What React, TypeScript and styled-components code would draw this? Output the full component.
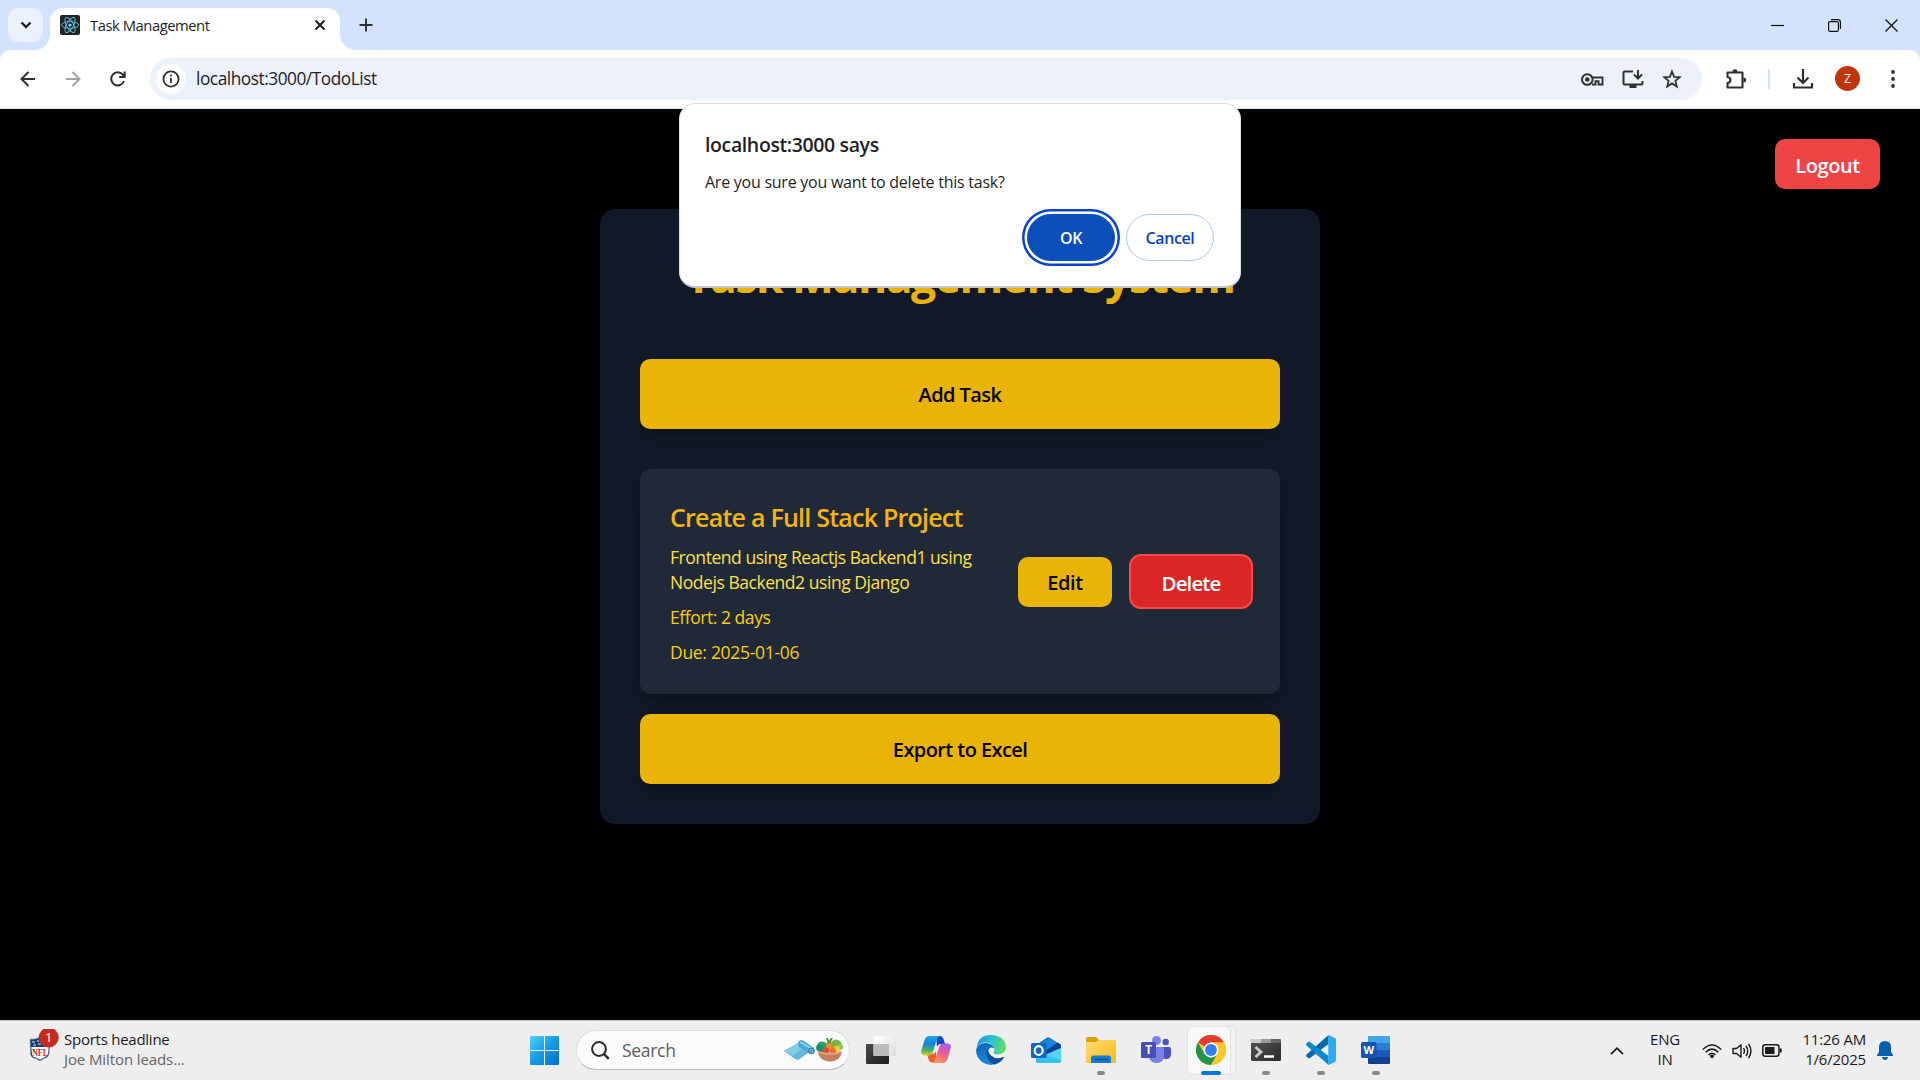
import React from "react";
import styled, { createGlobalStyle, css } from "styled-components";

const GlobalStyle = createGlobalStyle`
  *, *::before, *::after { box-sizing: border-box; }
  html, body { margin: 0; padding: 0; background: #000; overflow: hidden; }
  button { font: inherit; border: 0; padding: 0; margin: 0; background: none; }
  h1, h2, p { margin: 0; }
  svg { display: block; flex: none; }
`;

const Screen = styled.div`
  width: 1920px;
  height: 1080px;
  display: flex;
  flex-direction: column;
  position: relative;
  overflow: hidden;
  background: #000;
  font-family: "Open Sans", "Noto Sans", sans-serif;
  color: #1f1f1f;
`;

/* ---------- browser chrome ---------- */

const TabStrip = styled.header`
  height: 50px;
  flex: none;
  display: flex;
  align-items: flex-start;
  padding: 8px 22px 0 8px;
  background: #d3e3fd;
`;

const TabSearch = styled.button`
  width: 35px;
  height: 34px;
  border-radius: 11px;
  background: #ebf1fe;
  display: grid;
  place-items: center;
`;

const Tab = styled.div`
  position: relative;
  width: 290px;
  height: 42px;
  margin-left: 7px;
  padding: 0 13px 8px 10px;
  border-radius: 13px 13px 0 0;
  background: #fff;
  display: flex;
  align-items: center;

  &::before,
  &::after {
    content: "";
    position: absolute;
    bottom: 0;
    width: 15px;
    height: 15px;
  }
  &::before {
    left: -15px;
    background: radial-gradient(circle at 0 0, transparent 14.5px, #fff 15px);
  }
  &::after {
    right: -15px;
    background: radial-gradient(circle at 100% 0, transparent 14.5px, #fff 15px);
  }
`;

const TabTitle = styled.span`
  flex: 1;
  margin-left: 10px;
  font-size: 14.8px;
  line-height: 20px;
  letter-spacing: -0.47px;
`;

const NewTab = styled.button`
  width: 34px;
  height: 34px;
  margin-left: 9px;
  display: grid;
  place-items: center;
`;

const WindowControls = styled.div`
  margin-left: auto;
  height: 34px;
  display: flex;
  align-items: center;
  gap: 44px;
`;

const ToolbarBack = styled.div`
  height: 59px;
  flex: none;
  background: #d3e3fd;
`;

const Toolbar = styled.div`
  height: 59px;
  padding: 0 19px 1px 18px;
  border-radius: 10px 10px 0 0;
  border-bottom: 1px solid #dfe2e6;
  background: #fff;
  display: flex;
  align-items: center;
`;

const NavButtons = styled.div`
  display: flex;
  gap: 25px;
`;

const Omnibox = styled.div`
  width: 1552px;
  height: 42px;
  margin-left: 22px;
  padding: 0 20px 0 6px;
  border-radius: 21px;
  background: #ecf1fa;
  display: flex;
  align-items: center;
`;

const SiteInfo = styled.span`
  width: 30px;
  height: 30px;
  border-radius: 50%;
  background: #fff;
  display: grid;
  place-items: center;
`;

const Url = styled.span`
  margin-left: 10px;
  font-size: 17.3px;
  line-height: 24px;
  letter-spacing: -0.47px;
`;

const OmniActions = styled.div`
  margin-left: auto;
  display: flex;
  align-items: center;
  gap: 17px;
`;

const ToolbarActions = styled.div`
  flex: 1;
  margin-left: 22px;
  display: flex;
  align-items: center;
`;

const Divider = styled.span`
  width: 2px;
  height: 20px;
  margin: 0 22px 0 20px;
  background: #d3e3fd;
`;

const Avatar = styled.span`
  width: 25px;
  height: 25px;
  margin: 0 31px 0 21px;
  border-radius: 50%;
  background: #bf360c;
  color: #fff;
  font-size: 12.5px;
  line-height: 25px;
  text-align: center;
`;

/* ---------- page ---------- */

const Page = styled.main`
  height: 911px;
  flex: none;
  display: grid;
  grid-template-columns: 1fr 720px 1fr;
  align-items: start;
  background: #000;
`;

const LogoutButton = styled.button`
  grid-column: 3;
  justify-self: end;
  width: 105px;
  height: 50px;
  margin: 30px 40px 0 0;
  padding-top: 2px;
  border-radius: 10px;
  background: #ef4444;
  color: #fff;
  font-size: 20px;
  font-weight: 600;
  letter-spacing: -0.4px;
`;

const TaskPanel = styled.section`
  grid-column: 2;
  height: 615px;
  margin-top: 100px;
  padding: 40px;
  border-radius: 15px;
  background: #111827;
  display: flex;
  flex-direction: column;
`;

const PanelHeading = styled.h1`
  height: 52px;
  margin-bottom: 58px;
  padding-top: 2px;
  color: #eab308;
  font-size: 44.5px;
  font-weight: 700;
  line-height: 50px;
  letter-spacing: -1.5px;
  text-align: center;
  white-space: nowrap;
`;

const WideButton = styled.button`
  height: 70px;
  flex: none;
  padding-top: 2px;
  border-radius: 10px;
  background: #eab308;
  color: #000;
  font-size: 20px;
  font-weight: 600;
  line-height: 30px;
  letter-spacing: -0.58px;
  box-shadow: 0 12px 19px -4px rgba(0, 0, 0, 0.16), 0 5px 8px -5px rgba(0, 0, 0, 0.2);
`;

const TaskCard = styled.article`
  height: 225px;
  margin: 40px 0 20px;
  padding: 30px 27px 30px 30px;
  border-radius: 10px;
  background: #1f2937;
  box-shadow: 0 12px 19px -4px rgba(0, 0, 0, 0.2), 0 5px 8px -5px rgba(0, 0, 0, 0.2);
  display: flex;
  align-items: center;
  justify-content: space-between;
`;

const TaskInfo = styled.div`
  width: 330px;
  padding-top: 2px;
  display: flex;
  flex-direction: column;
  gap: 10px;
`;

const TaskTitle = styled.h2`
  color: #f5b50b;
  font-size: 25px;
  font-weight: 600;
  line-height: 35px;
  letter-spacing: -0.77px;
  white-space: nowrap;
`;

const TaskText = styled.p<{ $tone: string; $track?: number }>`
  color: ${(p) => p.$tone};
  font-size: 17.5px;
  line-height: 25px;
  letter-spacing: ${(p) => p.$track ?? -0.45}px;
  white-space: nowrap;
`;

const TaskActions = styled.div`
  display: flex;
  align-items: center;
  gap: 17px;
`;

const ActionButton = styled.button<{ $danger?: boolean }>`
  width: 94px;
  height: 50px;
  padding-top: 2px;
  border-radius: 10px;
  background: #eab308;
  color: #000;
  font-size: 20px;
  font-weight: 600;
  letter-spacing: -0.4px;
  ${(p) =>
    p.$danger &&
    css`
      width: 124px;
      height: 55px;
      border: 2px solid #f84a4a;
      border-radius: 12px;
      background: #dc2626;
      color: #fff;
      font-size: 20.5px;
      letter-spacing: -0.9px;
    `}
`;

/* ---------- confirm dialog ---------- */

const Dialog = styled.div`
  position: absolute;
  left: 679px;
  top: 103px;
  width: 562px;
  height: 185px;
  padding: 27px 26px 25px 25px;
  border: 1px solid #dcdee2;
  border-bottom: 2px solid #c2c6cc;
  border-radius: 16px;
  background: #fff;
  display: flex;
  flex-direction: column;
`;

const DialogTitle = styled.h2`
  font-size: 19.5px;
  font-weight: 600;
  line-height: 28px;
  letter-spacing: -0.38px;
`;

const DialogText = styled.p`
  margin-top: 12px;
  font-size: 16px;
  line-height: 22px;
  letter-spacing: -0.25px;
`;

const DialogActions = styled.div`
  margin-top: auto;
  display: flex;
  justify-content: flex-end;
  gap: 11px;
`;

const DialogButton = styled.button<{ $primary?: boolean }>`
  width: 88px;
  height: 47px;
  padding-top: 1px;
  border: 1px solid ${(p) => (p.$primary ? "#0b4fbb" : "#a8c7fa")};
  border-radius: 24px;
  background: ${(p) => (p.$primary ? "#0b4fbb" : "#fff")};
  color: ${(p) => (p.$primary ? "#fff" : "#0842c8")};
  font-size: 16px;
  font-weight: 600;
  letter-spacing: -0.4px;
  box-shadow: ${(p) => (p.$primary ? "0 0 0 2.5px #fff, 0 0 0 5px #0842cf" : "none")};
`;

/* ---------- taskbar ---------- */

const Taskbar = styled.footer`
  height: 60px;
  flex: none;
  border-top: 1px solid #c6c6c6;
  background: #eeeeee;
  display: flex;
`;

const Widget = styled.div`
  width: 530px;
  padding: 8px 0 0 27px;
  display: flex;
  gap: 5px;
`;

const WidgetLines = styled.div`
  font-size: 15px;
  line-height: 20px;
  letter-spacing: -0.25px;
  color: #1b1b1b;
`;

const WidgetSub = styled.div`
  color: #666;
  letter-spacing: -0.1px;
`;

const SearchPill = styled.div`
  width: 274px;
  height: 40px;
  margin: 9px 3px 0 17px;
  padding: 0 6px 0 14px;
  border: 1px solid #dedede;
  border-bottom-color: #bdbdbd;
  border-radius: 20px;
  background: #fbfbfb;
  display: flex;
  align-items: center;
  color: #5e5e5e;
  font-size: 17.5px;
`;

const SearchLabel = styled.span`
  flex: 1;
  margin-left: 12px;
  letter-spacing: -0.3px;
`;

const StartSlot = styled.div`
  padding-top: 15px;
`;

const AppSlot = styled.div`
  position: relative;
  width: 55px;
  height: 59px;
  padding-top: 14px;
  display: flex;
  justify-content: center;
  svg { position: relative; }
`;

const AppRow = styled.div`
  display: flex;
  padding-left: 0.5px;
`;

const ActiveTile = styled.span<{ $back?: boolean }>`
  position: absolute;
  top: 5px;
  left: ${(p) => (p.$back ? 12 : 3)}px;
  width: ${(p) => (p.$back ? 40 : 44)}px;
  height: 49px;
  border: 1px solid #e3e3e3;
  border-radius: 5px;
  background: ${(p) => (p.$back ? "#f3f3f3" : "#f8f8f8")};
`;

const Indicator = styled.span<{ $active?: boolean }>`
  position: absolute;
  bottom: 5px;
  width: ${(p) => (p.$active ? 20 : 8)}px;
  height: 4px;
  border-radius: 2px;
  background: ${(p) => (p.$active ? "#0078d4" : "#8a8a8a")};
`;

const Tray = styled.div`
  flex: 1;
  padding-right: 27px;
  display: flex;
  align-items: flex-start;
  justify-content: flex-end;
`;

const TrayText = styled.div<{ $align: string; $width: number; $gap: number }>`
  width: ${(p) => p.$width}px;
  margin-right: ${(p) => p.$gap}px;
  padding-top: 8px;
  text-align: ${(p) => p.$align};
  font-size: 15px;
  line-height: 20px;
  letter-spacing: -0.2px;
  white-space: nowrap;
  color: #1b1b1b;
`;

const TrayIcon = styled.span<{ $gap: number }>`
  height: 59px;
  margin-right: ${(p) => p.$gap}px;
  display: grid;
  place-items: center;
`;

/* ---------- icons ---------- */

const Line = ({ w, h = w, s = 2, c = "#303030", children }: any) => (
  <svg width={w} height={h} viewBox={`0 0 ${w} ${h}`} fill="none" stroke={c} strokeWidth={s}>
    {children}
  </svg>
);

const ReactMark = () => (
  <Line w={20} s={0.9} c="#58c4dc">
    <rect width="20" height="20" rx="2" fill="#222" stroke="none" />
    <circle cx="10" cy="10" r="1.5" fill="#7fe0f5" stroke="none" />
    {[0, 60, 120].map((a) => (
      <ellipse key={a} cx="10" cy="10" rx="8.5" ry="3.4" transform={`rotate(${a} 10 10)`} />
    ))}
  </Line>
);

const Shield = () => (
  <svg width="32" height="40" viewBox="0 0 32 40">
    <path d="M3 10 Q8 11 13 8 Q18 11 23 10 L22 25 Q21 29 17 29.500 L13 32 L9 29.500 Q4 29 3.500 25Z" fill="#173f78" stroke="#8293ad" strokeWidth=".7" />
    <path d="M4.300 18H21.700L21 25Q20 28 17 28.500L13 30.700L9 28.500Q5 28 5 25Z" fill="#fff" />
    <path d="M5 13h3M6 16h3M10 12h2M11 15h3" stroke="#dfe6f0" />
    <text x="13" y="27.300" textAnchor="middle" fontFamily="Liberation Serif" fontWeight="700" fontSize="11" textLength="16" lengthAdjust="spacingAndGlyphs" fill="#d5172e">NFL</text>
    <circle cx="21.700" cy="8.500" r="10" fill="#c42b1c" />
    <text x="21.700" y="13.200" textAnchor="middle" fontFamily="Open Sans" fontSize="13" fill="#fff">1</text>
  </svg>
);

const Windows = () => (
  <svg width="29" height="29" viewBox="0 0 29 29">
    <defs>
      <linearGradient id="win" x1="0" y1="0" x2="29" y2="29" gradientUnits="userSpaceOnUse">
        <stop stopColor="#4fd2fb" /><stop offset=".5" stopColor="#159be6" /><stop offset="1" stopColor="#006fd0" />
      </linearGradient>
    </defs>
    <path fill="url(#win)" d="M1 0h13v14H0V1Q0 0 1 0ZM15 0h13q1 0 1 1v13H15ZM0 15h14v14H1Q0 29 0 28ZM15 15h14v13q0 1-1 1H15Z" />
  </svg>
);

const YogaMat = () => (
  <svg width="32" height="22" viewBox="0 0 32 22">
    <path d="M0 12 14 4 27 12 14 21 11 20Z" fill="#62b9d8" />
    <path d="M0 12 13 4.500 20 9 8 17Z" fill="#83cde6" />
    <path d="M15 2Q17 0 20 2L30 9 26 15 15 8Q13 4 15 2Z" fill="#4ba9cd" />
    <path d="M16 3 28 10" stroke="#8cd5eb" strokeWidth="2" />
    <circle cx="27.500" cy="12" r="3.300" fill="#2e87b0" /><circle cx="27.500" cy="12" r="1.500" fill="none" stroke="#8bcfe6" />
  </svg>
);

const Basket = () => (
  <svg width="27" height="24" viewBox="0 0 27 24">
    <circle cx="6" cy="9" r="5.500" fill="#27a171" /><circle cx="3.500" cy="10" r="3.300" fill="#1c8c66" />
    <circle cx="20" cy="7" r="5.500" fill="#73b64a" /><circle cx="24" cy="9" r="3" fill="#8cc75f" />
    <path d="M10 5Q14 2 17 6L15 14H11Z" fill="#f08a2b" /><path d="M13 5 11 0M13 5 16 0" stroke="#39994b" strokeWidth="2" />
    <circle cx="21" cy="11" r="3" fill="#f7ce27" /><circle cx="10" cy="13" r="3.300" fill="#e64a2e" /><circle cx="17" cy="13" r="3" fill="#ee6a34" />
    <path d="M1.500 13Q14 17 26 13Q25 23 14 23.500 3 23 1.500 13Z" fill="#c58062" /><path d="M2 14Q14 18 25.500 14" stroke="#e4aa8d" fill="none" strokeWidth="1.500" />
  </svg>
);

const apps: { name: string; running?: boolean; active?: boolean; art: React.ReactNode }[] = [
  {
    name: "Task view",
    art: (
      <>
        <defs>
          <linearGradient id="tvd" x2="1" y2="1"><stop stopColor="#4a4a48" /><stop offset="1" stopColor="#1d1d1b" /></linearGradient>
          <linearGradient id="tvl" x2="1" y2="1"><stop stopColor="#fff" /><stop offset="1" stopColor="#dcdcdc" /></linearGradient>
        </defs>
        <rect x="0" y="9" width="23" height="20" rx="1" fill="url(#tvd)" />
        <rect x="7.500" y="1" width="22.500" height="20" rx="1" fill="url(#tvl)" />
        <path d="M7.500 9H23V21H8.500q-1 0-1-1Z" fill="#bcbcbc" />
      </>
    ),
  },
  {
    name: "Copilot",
    art: (
      <>
        <defs>
          <linearGradient id="cpa" x1="8" y1="1" x2="7" y2="21" gradientUnits="userSpaceOnUse"><stop stopColor="#1da8f0" /><stop offset=".4" stopColor="#1684d8" /><stop offset=".72" stopColor="#48b461" /><stop offset="1" stopColor="#f3d21b" /></linearGradient>
          <linearGradient id="cpb" x1="24" y1="8" x2="16" y2="28" gradientUnits="userSpaceOnUse"><stop stopColor="#a45bf0" /><stop offset=".5" stopColor="#ef5d93" /><stop offset="1" stopColor="#ff9a57" /></linearGradient>
        </defs>
        <path d="M15 1h4q2.500 0 3.300 2.500L24 9h-4q-3 0-4 3Z" fill="#1748c4" />
        <path d="M15 27.500h-4q-2.500 0-3.200-2.500L6 19h5q3 0 4-3Z" fill="#f0602c" />
        <path d="M8 1h11q-2 0-3 3l-4.500 14q-1 2.500-4 2.500H4Q-1 20.500.500 15L3.500 5Q5 1 8 1Z" fill="url(#cpa)" />
        <path d="M22 28H11q2 0 3-3l4.500-14q1-2.500 4-2.500H26q5 0 3.500 5.500L26.500 24Q25 28 22 28Z" fill="url(#cpb)" />
      </>
    ),
  },
  {
    name: "Edge",
    art: (
      <>
        <defs>
          <linearGradient id="eda" x1="2" y1="6" x2="29" y2="14" gradientUnits="userSpaceOnUse"><stop stopColor="#1a9ce5" /><stop offset=".5" stopColor="#2dc3cf" /><stop offset="1" stopColor="#66e052" /></linearGradient>
          <linearGradient id="edb" x1="3" y1="8" x2="10" y2="30" gradientUnits="userSpaceOnUse"><stop stopColor="#0d66b8" /><stop offset="1" stopColor="#1789e0" /></linearGradient>
        </defs>
        <path d="M.500 13Q2 0 15 0 29 .500 30 12 30 19 22 19.500 17 19.500 17.500 17 19 15.500 18.500 14 17 8 10 7.500 3 7.500.500 13Z" fill="url(#eda)" />
        <path d="M0 15Q2 8 9.500 8 17 8.500 18.500 13.500 14 10.500 12 15.500 10 23 17 29.800 11 30.500 6 27 0 22 0 15Z" fill="url(#edb)" />
        <path d="M12.500 13Q9 17 11.500 23 14 28.500 18 29.700 25 28 28 22.500 28.300 21.500 27 22 20 25 15 20.500 11.500 17 12.500 13Z" fill="#0d519c" />
      </>
    ),
  },
  {
    name: "Outlook",
    art: (
      <>
        <path d="M5 10 17 2 30 10v15q0 3-3 3H8q-3 0-3-3Z" fill="#1473c4" />
        <path d="M8 10 19 3 28 9 13 19Z" fill="#1688db" /><path d="M11 18 27 7.500 30 10v4L15 23Z" fill="#0a4296" />
        <path d="M5 19 14 20 30 13v12q0 3-3 3H8q-3 0-3-3Z" fill="#32c4ee" /><path d="M14 20 30 13v12Z" fill="#64dcf5" opacity=".7" />
        <rect x="0" y="8" width="15.500" height="15" rx="1.500" fill="#1267be" />
        <ellipse cx="7.700" cy="15.500" rx="4" ry="4.400" fill="none" stroke="#fff" strokeWidth="2.100" />
      </>
    ),
  },
  {
    name: "File Explorer",
    running: true,
    art: (
      <>
        <defs><linearGradient id="fld" x2="1" y2="1"><stop stopColor="#ffdc72" /><stop offset="1" stopColor="#f9b91e" /></linearGradient></defs>
        <path d="M0 4q0-2 2-2h8l3 3h15q2 0 2 2v5H0Z" fill="#dca006" />
        <path d="M0 7h10l3-2h15.500q1.500 0 1.500 1.500V28H0Z" fill="url(#fld)" />
        <path d="M5 28v-5q0-2.500 2.500-2.500h15q2.500 0 2.500 2.500v5Z" fill="#127bd2" /><path d="M8.500 24.500h13" stroke="#0a4b91" strokeWidth="1.500" />
      </>
    ),
  },
  {
    name: "Teams",
    art: (
      <>
        <circle cx="24.700" cy="7" r="3.200" fill="#4b53bc" /><path d="M20 12h8.500Q30 12 30 13.500V19q0 5-5 5-4 0-5-4Z" fill="#4b53bc" />
        <circle cx="15.500" cy="5.500" r="4.500" fill="#7b83eb" /><path d="M8 12h13.500Q23 12 23 13.500V20q0 8-7.500 8T8 20Z" fill="#7b83eb" />
        <rect y="7" width="15" height="16" rx="1.500" fill="#474eb8" />
        <text x="7.500" y="19.200" textAnchor="middle" fontFamily="Open Sans" fontWeight="700" fontSize="11.500" fill="#fff">T</text>
      </>
    ),
  },
  {
    name: "Chrome",
    running: true,
    active: true,
    art: (
      <>
        <circle cx="15" cy="15" r="15" fill="#fcc934" />
        <path d="M15 15 2 7.500A15 15 0 0 1 28 7.500H15Z" fill="#e33b2e" />
        <path d="M2 7.500A15 15 0 0 0 15 30L21.500 18.750 15 22.500 8.500 18.750Z" fill="#249447" />
        <path d="M15 30A15 15 0 0 0 28 7.500H15L21.500 18.750Z" fill="#fcc628" />
        <circle cx="15" cy="15" r="7.500" fill="#fff" /><circle cx="15" cy="15" r="5.900" fill="#347ff0" />
      </>
    ),
  },
  {
    name: "Terminal",
    running: true,
    art: (
      <>
        <defs><linearGradient id="trm" x2="1" y2="1"><stop stopColor="#555" /><stop offset="1" stopColor="#2b2b2b" /></linearGradient></defs>
        <rect y="4" width="30" height="22" rx="1.500" fill="url(#trm)" />
        <path d="M1.500 4H10v4H0V5.500Q0 4 1.500 4Z" fill="#cdcdcd" /><path d="M10 4h10v4H10Z" fill="#999" /><path d="M20 4h8.500Q30 4 30 5.500V8H20Z" fill="#666" />
        <path d="m4.500 12 5.500 5-5.500 5" fill="none" stroke="#ccc" strokeWidth="2.900" /><path d="M13 21.500h10" stroke="#fff" strokeWidth="2.500" />
      </>
    ),
  },
  {
    name: "VS Code",
    running: true,
    art: (
      <>
        <path d="M22.500 0v9L4 23q-1 .700-2 0L.500 21.500q-.800-1 0-2Z" fill="#0969ab" />
        <path d="M22.500 30v-9L4 7q-1-.700-2 0L.500 8.500q-.800 1 0 2Z" fill="#0a87cd" />
        <path d="M22.500 0 29 3q1 .500 1 2v20q0 1.500-1 2l-6.500 3Q21 29 22.300 27V3Q21 1 22.500 0Z" fill="#2aabf2" />
      </>
    ),
  },
  {
    name: "Word",
    running: true,
    art: (
      <>
        <path d="M8 1h20q1 0 1 1v6H7V2q0-1 1-1Z" fill="#41a5ee" /><path d="M7 8h22v7H7Z" fill="#2b7cd3" /><path d="M7 15h22v7H7Z" fill="#185abd" /><path d="M7 22h22v6q0 1-1 1H8q-1 0-1-1Z" fill="#103f91" />
        <rect y="7" width="15.500" height="16" rx="1.500" fill="#1854ad" />
        <text x="7.750" y="19" textAnchor="middle" fontFamily="Open Sans" fontWeight="700" fontSize="11" fill="#fff">W</text>
      </>
    ),
  },
];

export default function App() {
  return (
    <Screen>
      <GlobalStyle />
      <TabStrip>
        <TabSearch>
          <Line w={12} h={8} s={2.4} c="#1f1f1f"><path d="m1.500 1.500 4.500 4.500 4.500-4.500" /></Line>
        </TabSearch>
        <Tab>
          <ReactMark />
          <TabTitle>Task Management</TabTitle>
          <Line w={14} s={2} c="#1f1f1f"><path d="m2.500 2.500 9 9m0-9-9 9" /></Line>
        </Tab>
        <NewTab>
          <Line w={14} s={1.900}><path d="M7 .500v13M.500 7h13" /></Line>
        </NewTab>
        <WindowControls>
          <Line w={13} s={1.200} c="#111"><path d="M0 6.500h13" /></Line>
          <Line w={13} s={1.200} c="#111">
            <rect x=".600" y="2.600" width="9.800" height="9.800" rx="1.500" />
            <path d="M3 .600h7q2.400 0 2.400 2.400v7" />
          </Line>
          <Line w={13} s={1.300} c="#111"><path d="m.500.500 12 12m0-12-12 12" /></Line>
        </WindowControls>
      </TabStrip>

      <ToolbarBack>
        <Toolbar>
          <NavButtons>
            <Line w={20}><path d="M17 10H4m6.500-7L3.500 10l7 7" /></Line>
            <Line w={20} c="#a3a3a3"><path d="M3 10h13M9.500 3l7 7-7 7" /></Line>
            <Line w={20}><path d="M16 12A6.600 6.600 0 1 1 14.800 5.500L16.500 7.500M16.700 2.500v5.500h-5.500" /></Line>
          </NavButtons>
          <Omnibox>
            <SiteInfo>
              <Line w={18} s={1.800}>
                <circle cx="9" cy="9" r="7.600" /><path d="M9 8v5M9 4.800v1.800" />
              </Line>
            </SiteInfo>
            <Url>localhost:3000/TodoList</Url>
            <OmniActions>
              <Line w={24} h={20}>
                <circle cx="7.300" cy="10.500" r="5.300" /><circle cx="7.300" cy="10.500" r="2.300" fill="#303030" stroke="none" />
                <path d="M12 8.500h10.500v7h-4v-3.300h-3v3.300h-3.500" strokeWidth="1.900" />
              </Line>
              <Line w={24} h={20}>
                <path d="M12 2.500H3.500q-1 0-1 1v11q0 1 1 1h17q1 0 1-1v-2.500M17 1v8.500m-4-4 4 4 4-4" /><path d="M8.500 17.500h7" strokeWidth="3" />
              </Line>
              <Line w={20} s={1.800}>
                <path d="m10 2.500 2.100 5.300 5.600.400-4.300 3.700 1.400 5.600-4.800-3.100-4.800 3.100 1.400-5.600-4.300-3.700 5.600-.400Z" />
              </Line>
            </OmniActions>
          </Omnibox>
          <ToolbarActions>
            <Line w={24} h={24} s={2.100}>
              <path d="M3.500 5.500h15v15h-15V16q3-.300 3-3t-3-3Z" strokeLinejoin="round" />
              <path d="M8.500 5q0-2.700 2.500-2.700T13.500 5ZM19.500 10.500q2.700 0 2.700 2.500t-2.700 2.500Z" fill="#303030" stroke="none" />
            </Line>
            <Divider />
            <Line w={22} h={22} s={2.200}>
              <path d="M11 1v13.500M5.500 9.500l5.500 5.500 5.500-5.500M2 15v4.500h18V15" />
            </Line>
            <Avatar>Z</Avatar>
            <Line w={4} h={18} c="none">
              <g fill="#303030"><circle cx="2" cy="2" r="1.900" /><circle cx="2" cy="9" r="1.900" /><circle cx="2" cy="16" r="1.900" /></g>
            </Line>
          </ToolbarActions>
        </Toolbar>
      </ToolbarBack>

      <Page>
        <TaskPanel>
          <PanelHeading>Task Management System</PanelHeading>
          <WideButton>Add Task</WideButton>
          <TaskCard>
            <TaskInfo>
              <TaskTitle>Create a Full Stack Project</TaskTitle>
              <TaskText $tone="#fde047">
                Frontend using Reactjs Backend1 using<br />
                Nodejs Backend2 using Django
              </TaskText>
              <TaskText $tone="#facc15">Effort: 2 days</TaskText>
              <TaskText $tone="#facc15" $track={-0.3}>Due: 2025-01-06</TaskText>
            </TaskInfo>
            <TaskActions>
              <ActionButton>Edit</ActionButton>
              <ActionButton $danger>Delete</ActionButton>
            </TaskActions>
          </TaskCard>
          <WideButton>Export to Excel</WideButton>
        </TaskPanel>
        <LogoutButton>Logout</LogoutButton>
      </Page>

      <Taskbar>
        <Widget>
          <Shield />
          <WidgetLines>
            Sports headline
            <WidgetSub>Joe Milton leads...</WidgetSub>
          </WidgetLines>
        </Widget>
        <StartSlot><Windows /></StartSlot>
        <SearchPill>
          <Line w={19} s={2} c="#2b2b2b"><circle cx="8" cy="8" r="6.900" /><path d="m12.800 12.800 5 5" strokeWidth="2.400" /></Line>
          <SearchLabel>Search</SearchLabel>
          <YogaMat />
          <Basket />
        </SearchPill>
        <AppRow>
          {apps.map((app) => (
            <AppSlot key={app.name}>
              {app.active && <ActiveTile $back />}
              {app.active && <ActiveTile />}
              <svg width="30" height="30" viewBox="0 0 30 30">{app.art}</svg>
              {app.running && <Indicator $active={app.active} />}
            </AppSlot>
          ))}
        </AppRow>
        <Tray>
          <TrayIcon $gap={21}><Line w={14} h={8} s={1.700} c="#1b1b1b"><path d="m1 7.200 6-6 6 6" /></Line></TrayIcon>
          <TrayText $align="center" $width={40} $gap={17}>ENG<br />IN</TrayText>
          <TrayIcon $gap={10}>
            <Line w={20} h={16} s={1.500} c="#1b1b1b">
              <path d="M.800 6.500Q10-2.500 19.200 6.500M3.700 9.300Q10 3 16.300 9.300M6.500 12Q10 8.500 13.500 12" /><circle cx="10" cy="13.300" r="1.900" fill="#1b1b1b" stroke="none" />
            </Line>
          </TrayIcon>
          <TrayIcon $gap={10}>
            <Line w={20} h={18} s={1.400} c="#1b1b1b">
              <path d="M1 6.500h3.500L9 2.800v12.400l-4.500-3.700H1ZM11.500 6.200q2 2.800 0 5.600M14 4q3.500 5 0 10M16.500 2q5 7 0 14" strokeLinejoin="round" />
            </Line>
          </TrayIcon>
          <TrayIcon $gap={17}>
            <Line w={20} h={13} s={1.500} c="#1b1b1b">
              <rect x=".800" y=".800" width="16.200" height="11.400" rx="2.500" /><rect x="3" y="3" width="9.500" height="7" rx=".500" fill="#1b1b1b" stroke="none" /><path d="M18.700 4.500v4" strokeWidth="2" />
            </Line>
          </TrayIcon>
          <TrayText $align="right" $width={67} $gap={11}>11:26 AM<br />1/6/2025</TrayText>
          <TrayIcon $gap={0}>
            <svg width="16" height="19" viewBox="0 0 16 19">
              <path d="M8 0Q14 0 14 6v5l2 3v1H0v-1l2-3V6Q2 0 8 0ZM5 16h6q-.500 3-3 3t-3-3Z" fill="#0560ac" />
            </svg>
          </TrayIcon>
        </Tray>
      </Taskbar>

      <Dialog>
        <DialogTitle>localhost:3000 says</DialogTitle>
        <DialogText>Are you sure you want to delete this task?</DialogText>
        <DialogActions>
          <DialogButton $primary>OK</DialogButton>
          <DialogButton>Cancel</DialogButton>
        </DialogActions>
      </Dialog>
    </Screen>
  );
}
